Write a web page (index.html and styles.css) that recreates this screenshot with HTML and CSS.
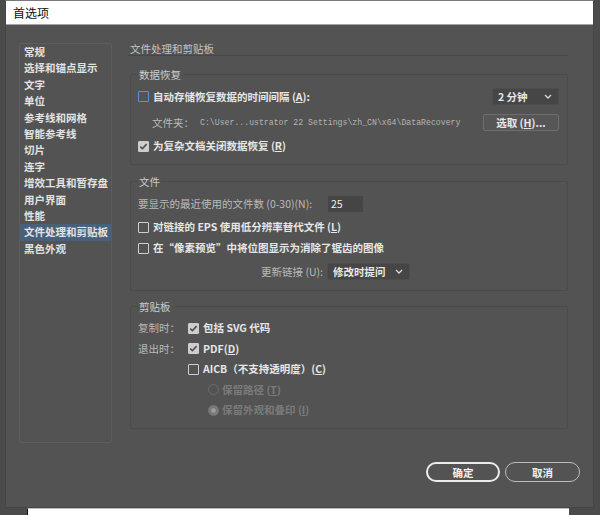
FILE: index.html
```html
<!DOCTYPE html>
<html lang="zh-CN">
<head>
    <meta charset="UTF-8">
    <title>首选项</title>
    <link rel="stylesheet" href="styles.css">
</head>
<body>
    <div class="dialog">
        <div class="titlebar">首选项</div>
        <div class="dialog-body">
            <div class="panes">
                <!-- Category list -->
                <ul class="nav">
                    <li>常规</li>
                    <li>选择和锚点显示</li>
                    <li>文字</li>
                    <li>单位</li>
                    <li>参考线和网格</li>
                    <li>智能参考线</li>
                    <li>切片</li>
                    <li>连字</li>
                    <li>增效工具和暂存盘</li>
                    <li>用户界面</li>
                    <li>性能</li>
                    <li class="active">文件处理和剪贴板</li>
                    <li>黑色外观</li>
                </ul>

                <div class="main">
                    <div class="section-title">文件处理和剪贴板</div>

                    <fieldset class="group group-recovery">
                        <legend>数据恢复</legend>
                        <div class="row row-between">
                            <label class="check"><span class="box focus"></span>自动存储恢复数据的时间间隔 (<u>A</u>):</label>
                            <div class="select select-interval">
                                <span>2 分钟</span>
                                <svg width="8" height="5" viewBox="0 0 8 5"><polyline points="1,1 4,4 7,1" fill="none" stroke="#d8d8d8" stroke-width="1.3"/></svg>
                            </div>
                        </div>
                        <div class="row row-between">
                            <div class="folder">
                                <span class="muted">文件夹：</span>
                                <span class="path">C:\User...ustrator 22 Settings\zh_CN\x64\DataRecovery</span>
                            </div>
                            <button class="btn">选取 (<u>H</u>)...</button>
                        </div>
                        <div class="row">
                            <label class="check"><span class="box checked"><svg width="11" height="11" viewBox="0 0 11 11"><polyline points="2.3,5.6 4.4,7.7 8.6,3.1" fill="none" stroke="#4e4e4e" stroke-width="1.6"/></svg></span>为复杂文档关闭数据恢复 (<u>R</u>)</label>
                        </div>
                    </fieldset>

                    <fieldset class="group group-files">
                        <legend>文件</legend>
                        <div class="row">
                            <span class="muted count-label">要显示的最近使用的文件数 (0-30)(N):</span>
                            <div class="num">25</div>
                        </div>
                        <div class="row">
                            <label class="check"><span class="box"></span>对链接的 EPS 使用低分辨率替代文件 (<u>L</u>)</label>
                        </div>
                        <div class="row">
                            <label class="check"><span class="box"></span>在“像素预览”中将位图显示为消除了锯齿的图像</label>
                        </div>
                        <div class="row">
                            <span class="muted link-label">更新链接 (U):</span>
                            <div class="select select-links">
                                <span>修改时提问</span>
                                <svg width="8" height="5" viewBox="0 0 8 5"><polyline points="1,1 4,4 7,1" fill="none" stroke="#d8d8d8" stroke-width="1.3"/></svg>
                            </div>
                        </div>
                    </fieldset>

                    <fieldset class="group group-clipboard">
                        <legend>剪贴板</legend>
                        <div class="row">
                            <span class="muted clip-label">复制时：</span>
                            <label class="check"><span class="box checked"><svg width="11" height="11" viewBox="0 0 11 11"><polyline points="2.3,5.6 4.4,7.7 8.6,3.1" fill="none" stroke="#4e4e4e" stroke-width="1.6"/></svg></span>包括 SVG 代码</label>
                        </div>
                        <div class="row">
                            <span class="muted clip-label">退出时：</span>
                            <label class="check"><span class="box checked"><svg width="11" height="11" viewBox="0 0 11 11"><polyline points="2.3,5.6 4.4,7.7 8.6,3.1" fill="none" stroke="#4e4e4e" stroke-width="1.6"/></svg></span>PDF(<u>D</u>)</label>
                        </div>
                        <div class="row indent">
                            <label class="check"><span class="box"></span>AICB（不支持透明度）(<u>C</u>)</label>
                        </div>
                        <div class="row indent-2">
                            <label class="radio disabled"><span class="dot"></span>保留路径 (<u>T</u>)</label>
                        </div>
                        <div class="row indent-2">
                            <label class="radio disabled"><span class="dot on"></span>保留外观和叠印 (<u>I</u>)</label>
                        </div>
                    </fieldset>
                </div>
            </div>

            <div class="footer">
                <button class="pill pill-ok">确定</button>
                <button class="pill pill-cancel">取消</button>
            </div>
        </div>
    </div>
    <div class="behind"></div>
</body>
</html>
```

FILE: styles.css
```css
/* Preferences dialog */
body {
    margin: 0;
    height: 515px;
    overflow: hidden;
    background-color: #4b4b4b;
    font-family: "Noto Sans CJK SC", "Noto Sans", sans-serif;
    font-size: 10.5px;
    line-height: 13px;
    color: #e4e4e4;
}

.dialog {
    margin-left: 5px;
    width: 587px;
    border: 1px solid #454545;
    border-top-color: #7a7a7a;
    background-color: #535353;
}

.titlebar {
    height: 23px;
    line-height: 23px;
    padding-left: 7px;
    background-color: #fff;
    border-bottom: 1px solid #a3a3a3;
    color: #111;
    font-size: 12px;
}

.dialog-body {
    height: 482px;
    box-sizing: border-box;
    padding: 17px 0 0 13px;
}

.panes {
    display: flex;
    gap: 16px;
}

/* left list */
.nav {
    list-style: none;
    margin: 1px 0 0;
    padding: 0;
    width: 93px;
    height: 400px;
    box-sizing: border-box;
    border: 1px solid #5d5d5d;
    border-radius: 2px;
}

.nav li {
    line-height: 16.4px;
    padding-left: 4px;
    font-weight: 700;
    white-space: nowrap;
    color: #e2e2e2;
}

.nav li.active {
    background-color: #48617b;
}

/* right side */
.main {
    width: 440px;
}

.section-title {
    height: 13px;
    line-height: 13px;
    padding-left: 2px;
    border-bottom: 1px solid #474747;
    color: #c4c4c4;
}

.group {
    margin: 12px 0 0 2px;
    padding: 7px 8px 12px 7px;
    min-width: 0;
    border: 1px solid #4b4b4b;
    border-radius: 2px;
}

.group legend {
    padding: 0 1px;
    line-height: 13px;
    color: #cdcdcd;
}

.group-files {
    margin-top: 10px;
    padding-top: 8px;
    padding-bottom: 10px;
}

.group-clipboard {
    margin-top: 9px;
    padding-top: 9px;
    padding-bottom: 12px;
}

.row {
    display: flex;
    align-items: center;
    min-height: 12px;
    line-height: 12px;
}

.row + .row {
    margin-top: 9px;
}

.group-clipboard .row + .row {
    margin-top: 8.5px;
}

.row-between {
    justify-content: space-between;
}

.indent {
    padding-left: 50px;
}

.indent-2 {
    padding-left: 70px;
}

.muted {
    color: #bababa;
}

u {
    text-decoration-thickness: 1px;
    text-underline-offset: 1px;
}

.check,
.radio {
    display: flex;
    align-items: center;
    font-weight: 700;
    white-space: nowrap;
    color: #e6e6e6;
}

.box {
    width: 11px;
    height: 11px;
    box-sizing: border-box;
    margin-right: 4px;
    border: 1px solid #cfcfcf;
    border-radius: 1px;
    display: flex;
}

.box.focus {
    border-color: #5f8fd2;
}

.box.checked {
    background-color: #cdcdcd;
    border-color: #cdcdcd;
}

.box.checked svg {
    margin: -1px;
}

.radio.disabled {
    color: #7b7b7b;
}

.dot {
    width: 11px;
    height: 11px;
    box-sizing: border-box;
    margin-right: 3px;
    border: 1px solid #6c6c6c;
    border-radius: 50%;
}

.dot.on {
    border-color: #797979;
    background-image: radial-gradient(circle, #9c9c9c 0 2px, #797979 2.5px);
}

.select {
    height: 17px;
    box-sizing: border-box;
    display: flex;
    align-items: center;
    justify-content: space-between;
    padding: 0 6px 0 5px;
    background-color: #464646;
    border: 1px solid #4d4d4d;
    border-radius: 2px;
    font-weight: 700;
    color: #e8e8e8;
}

.select-interval {
    width: 67px;
}

.select-links {
    width: 83px;
    margin-left: 4px;
}

.folder {
    display: flex;
    align-items: center;
    padding-left: 14px;
}

.path {
    margin-left: 6px;
    font-family: "Liberation Mono", monospace;
    font-size: 8.2px;
    color: #b4b4b4;
}

.btn {
    width: 76px;
    height: 17px;
    padding: 0;
    background-color: #565656;
    border: 1px solid #6e6e6e;
    border-radius: 2px;
    font: inherit;
    font-weight: 700;
    color: #e8e8e8;
}

.num {
    width: 35px;
    height: 16px;
    line-height: 16px;
    box-sizing: border-box;
    padding-left: 3px;
    background-color: #454545;
    color: #f0f0f0;
}

.count-label {
    width: 190px;
}

.link-label {
    width: 185px;
    text-align: right;
}

.clip-label {
    width: 50px;
}

/* buttons */
.footer {
    display: flex;
    justify-content: flex-end;
    gap: 5px;
    margin-top: 19px;
    padding-right: 13px;
}

.pill {
    height: 20px;
    padding: 0;
    background: transparent;
    border-radius: 10px;
    font: inherit;
    font-weight: 700;
    color: #f2f2f2;
}

.pill-ok {
    width: 74px;
    border: 2px solid #ececec;
}

.pill-cancel {
    width: 75px;
    border: 1.5px solid #bcbcbc;
}

/* window behind the dialog */
.behind {
    margin-left: 27px;
    width: 541px;
    height: 7px;
    background-color: #fff;
    border-left: 1px solid #111;
    border-top: 1px solid #bdbdbd;
}
```
